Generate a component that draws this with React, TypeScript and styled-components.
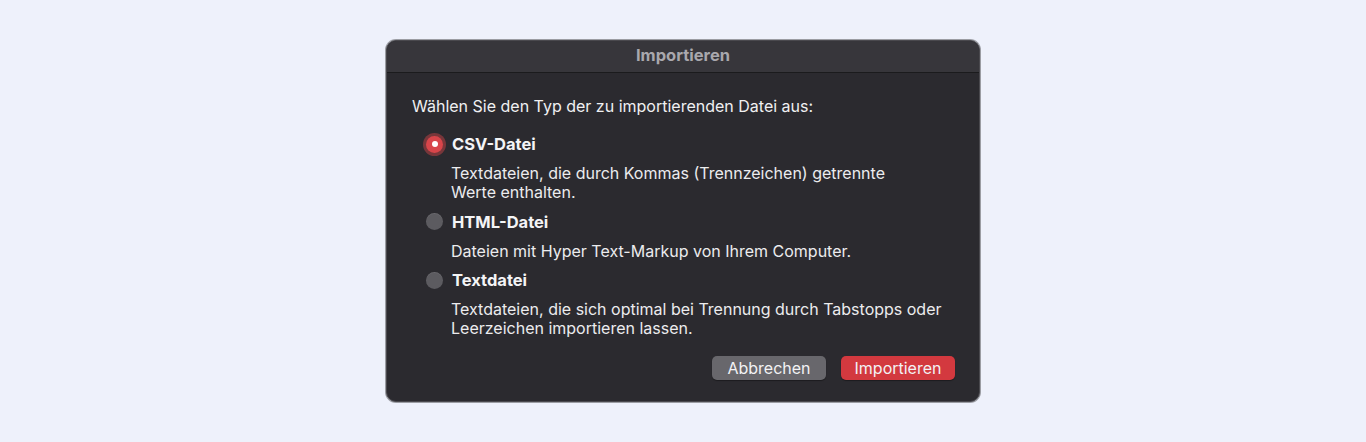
import styled, { createGlobalStyle } from "styled-components";

const GlobalStyle = createGlobalStyle`
  html, body {
    margin: 0;
    padding: 0;
    background: #eef1fb;
    font-family: Inter, "Noto Sans", sans-serif;
  }
`;

type Option = {
  id: string;
  label: string;
  lines: string[];
};

const options: Option[] = [
  {
    id: "csv",
    label: "CSV-Datei",
    lines: [
      "Textdateien, die durch Kommas (Trennzeichen) getrennte",
      "Werte enthalten.",
    ],
  },
  {
    id: "html",
    label: "HTML-Datei",
    lines: ["Dateien mit Hyper Text-Markup von Ihrem Computer."],
  },
  {
    id: "txt",
    label: "Textdatei",
    lines: [
      "Textdateien, die sich optimal bei Trennung durch Tabstopps oder",
      "Leerzeichen importieren lassen.",
    ],
  },
];

function App() {
  const selected = "csv";
  return (
    <Page>
      <GlobalStyle />
      <Dialog>
        <TitleBar>Importieren</TitleBar>
        <Body>
          <Prompt>Wählen Sie den Typ der zu importierenden Datei aus:</Prompt>
          <OptionList>
            {options.map((o) => (
              <OptionItem key={o.id}>
                <OptionHead>
                  <Radio $checked={o.id === selected} />
                  <OptionLabel>{o.label}</OptionLabel>
                </OptionHead>
                <Description>
                  {o.lines.map((l) => (
                    <div key={l}>{l}</div>
                  ))}
                </Description>
              </OptionItem>
            ))}
          </OptionList>
          <Buttons>
            <Button>Abbrechen</Button>
            <Button $primary>Importieren</Button>
          </Buttons>
        </Body>
      </Dialog>
    </Page>
  );
}

const Page = styled.div`
  width: 1366px;
  height: 442px;
  display: flex;
  justify-content: center;
  padding-top: 40px;
  box-sizing: border-box;
`;

const Dialog = styled.div`
  width: 594px;
  height: 362px;
  box-sizing: border-box;
  background: #2b2a2f;
  border: 1px solid #4a494e;
  border-radius: 10px;
  overflow: hidden;
  display: flex;
  flex-direction: column;
  color: #f0f0f2;
  box-shadow: 0 0 0 1px rgba(0, 0, 0, 0.35);
`;

const TitleBar = styled.div`
  height: 32px;
  box-sizing: border-box;
  padding-bottom: 4px;
  flex-shrink: 0;
  display: flex;
  align-items: center;
  justify-content: center;
  background: #37363b;
  border-bottom: 1px solid #1b1b1d;
  font-size: 16.5px;
  font-weight: 700;
  color: #a9a8ad;
`;

const Body = styled.div`
  flex: 1;
  padding: 24px 24px 0 25px;
  display: flex;
  flex-direction: column;
`;

const Prompt = styled.div`
  font-size: 16px;
  line-height: 19px;
`;

const OptionList = styled.div`
  margin-top: 18px;
  padding-left: 13px;
  display: flex;
  flex-direction: column;
  gap: 9.5px;
`;

const OptionItem = styled.div`
  display: flex;
  flex-direction: column;
  gap: 10px;
`;

const OptionHead = styled.div`
  display: flex;
  align-items: center;
  gap: 9px;
  height: 20px;
`;

const Radio = styled.span<{ $checked?: boolean }>`
  width: 17px;
  height: 17px;
  border-radius: 50%;
  box-sizing: border-box;
  position: relative;
  flex-shrink: 0;
  margin-left: 1px;
  background: ${(p) => (p.$checked ? "#d8454a" : "#5c5b60")};
  box-shadow: ${(p) =>
    p.$checked
      ? "0 0 0 3px rgba(216, 69, 74, 0.45)"
      : "inset 0 1px 0 rgba(255,255,255,0.08)"};
  &::after {
    content: "";
    display: ${(p) => (p.$checked ? "block" : "none")};
    position: absolute;
    left: 5.5px;
    top: 5.5px;
    width: 6px;
    height: 6px;
    border-radius: 50%;
    background: #fff;
  }
`;

const OptionLabel = styled.span`
  font-size: 16.5px;
  font-weight: 700;
  color: #f4f4f6;
`;

const Description = styled.div`
  padding-left: 26px;
  font-size: 16px;
  line-height: 19px;
  color: #ececee;
`;

const Buttons = styled.div`
  margin-top: auto;
  margin-bottom: 21px;
  display: flex;
  justify-content: flex-end;
  gap: 15px;
`;

const Button = styled.button<{ $primary?: boolean }>`
  width: 114px;
  height: 24px;
  border: none;
  border-radius: 5px;
  font-family: inherit;
  font-size: 16px;
  color: #f2f2f4;
  background: ${(p) => (p.$primary ? "#d3393f" : "#68676c")};
  box-shadow: 0 1px 1px rgba(0, 0, 0, 0.35);
  padding: 0;
`;

export default App;
